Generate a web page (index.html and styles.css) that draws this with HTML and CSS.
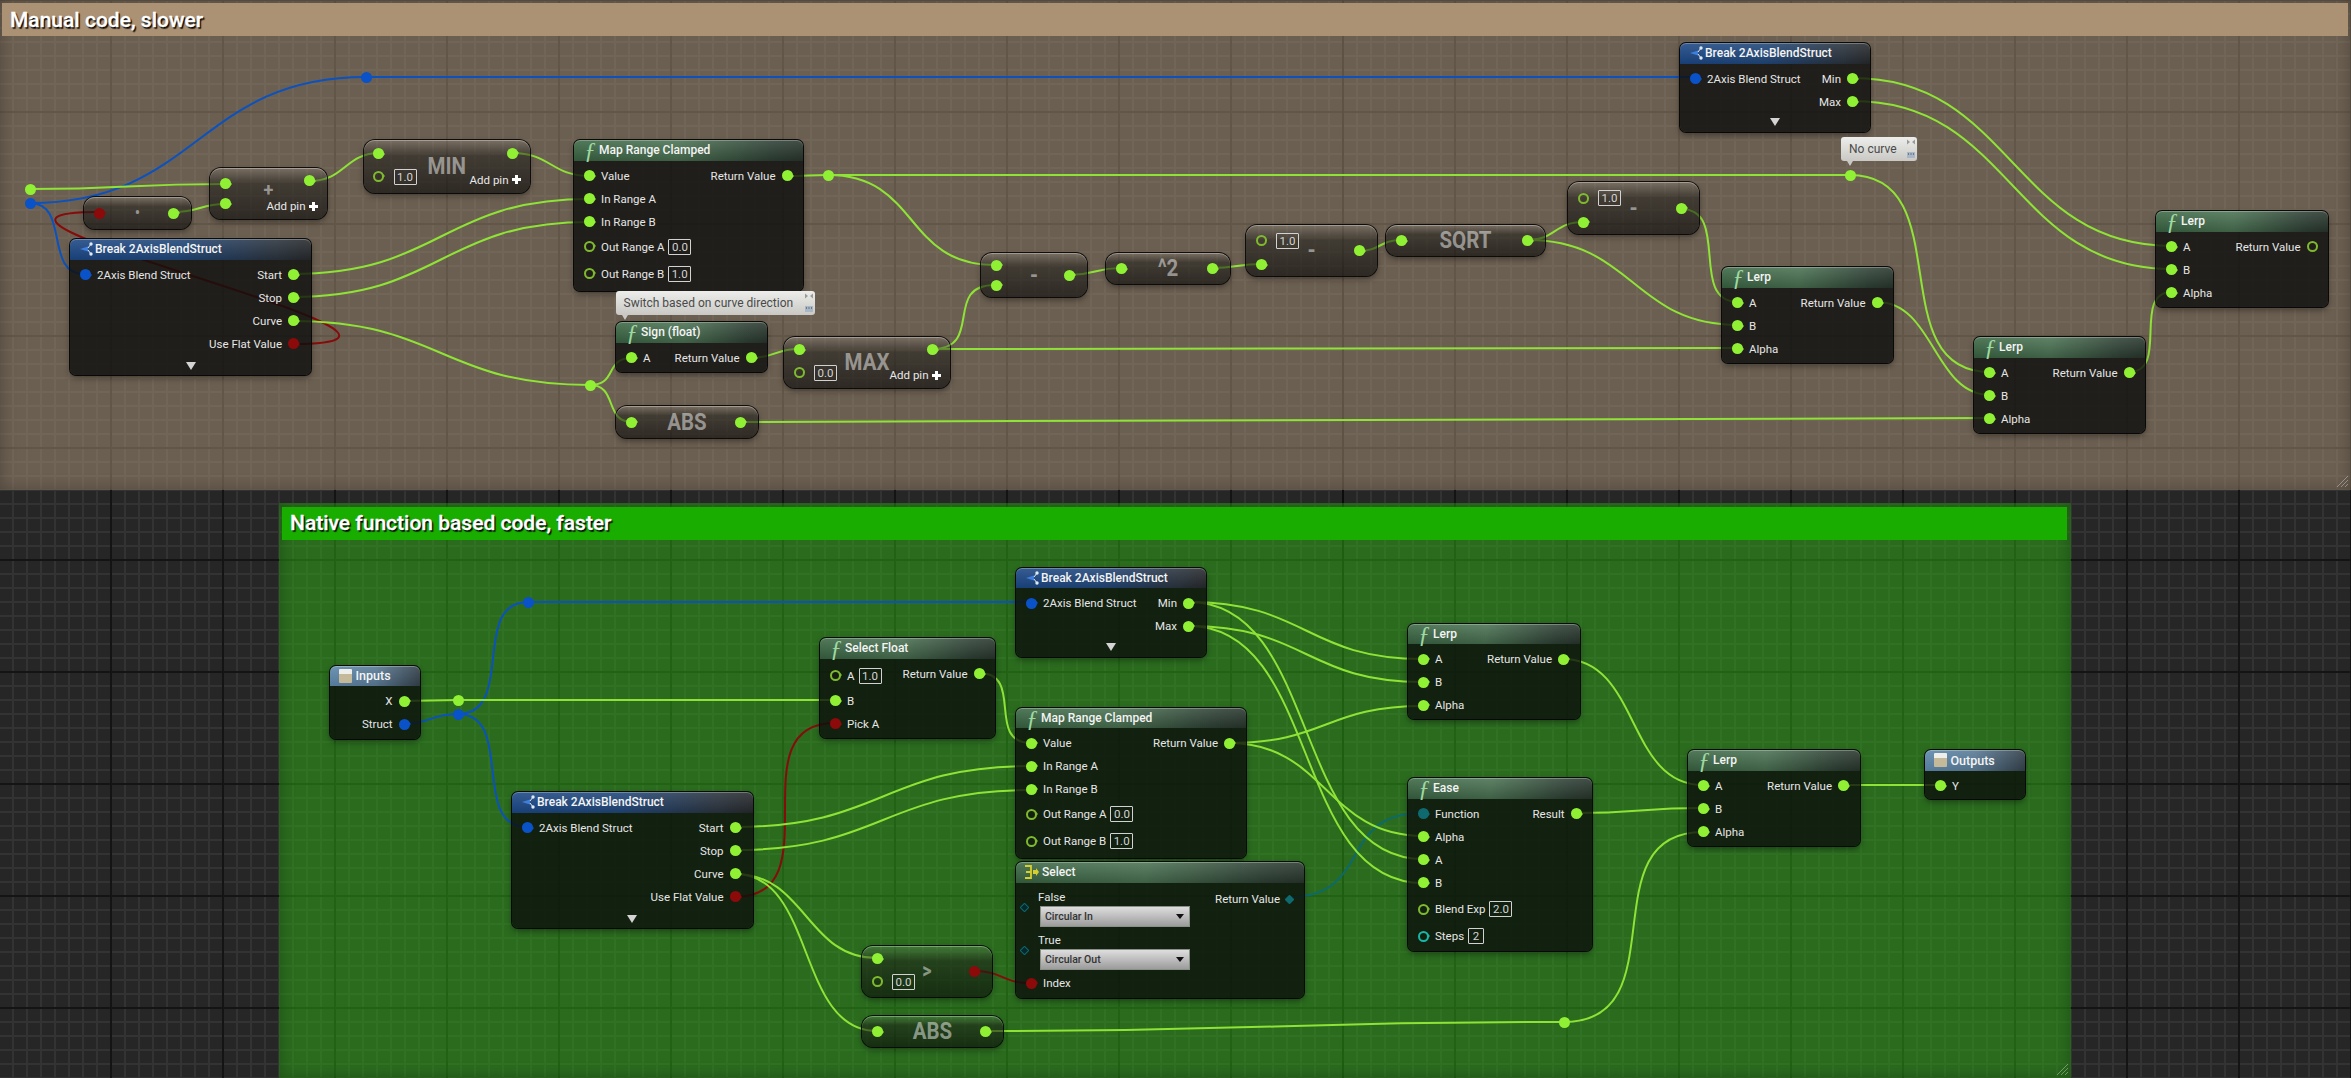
FILE: index.html
```html
<!DOCTYPE html>
<html lang="en">
<head>
<meta charset="utf-8">
<title>Blueprint graph</title>
<link rel="stylesheet" href="styles.css">
</head>
<body>
<main class="graph">

  <section class="comment tan">
    <h2 class="comment-title">Manual code, slower</h2>
    <svg class="grip" viewBox="0 0 12 12"><path d="M1 12 12 1M5 12l7-7M9 12l3-3"/></svg>
  </section>
  <section class="comment green">
    <h2 class="comment-title">Native function based code, faster</h2>
    <svg class="grip" viewBox="0 0 12 12"><path d="M1 12 12 1M5 12l7-7M9 12l3-3"/></svg>
  </section>

  <svg class="wires" viewBox="0 0 2351 1078">
    <g class="w-blue">
      <path d="M30 203C198 203 198 77 366 77"/>
      <path d="M366 77H1695"/>
      <path d="M30 203C70 203 44 274 84 274"/>
      <path d="M403 724C430 724 430 714 458 714"/>
      <path d="M458 714C516 714 470 602 528 602"/>
      <path d="M458 714C515 714 470 827 527 827"/>
      <path d="M528 602H1031"/>
    </g>
    <g class="w-red">
      <path d="M292 344C510 344 -110 212 99 212"/>
      <path d="M735 897C835 897 735 723 835 723"/>
      <path d="M975 971C1002 971 1002 983 1030 983"/>
    </g>
    <path class="w-teal" d="M1288 897C1375 897 1335 813 1423 813"/>
    <g class="w-green">
      <path d="M30 189C127 189 128 184 225 184"/>
      <path d="M174 212C200 212 200 204 225 204"/>
      <path d="M310 181C345 181 345 153 380 153"/>
      <path d="M512 153C551 153 551 176 590 176"/>
      <path d="M292 274C441 274 441 199 590 199"/>
      <path d="M292 297C441 297 441 222 590 222"/>
      <path d="M292 321C441 321 441 385 590 385"/>
      <path d="M590 385C618 385 604 358 632 358"/>
      <path d="M590 385C618 385 604 422 632 422"/>
      <path d="M787 176C808 176 808 175 828 175H1850"/>
      <path d="M828 175C920 175 903 265 995 265"/>
      <path d="M750 358C775 358 775 349 799 349"/>
      <path d="M932 349C985 349 942 285 995 285"/>
      <path d="M932 349C1335 349 1335 348 1738 348"/>
      <path d="M740 422C1365 422 1365 418 1990 418"/>
      <path d="M1069 275C1095 275 1095 268 1121 268"/>
      <path d="M1212 268C1237 268 1237 264 1262 264"/>
      <path d="M1359 251C1380 251 1380 240 1401 240"/>
      <path d="M1528 240C1555 240 1555 222 1583 222"/>
      <path d="M1528 240C1633 240 1633 325 1738 325"/>
      <path d="M1681 209C1731 209 1688 302 1738 302"/>
      <path d="M1877 302C1934 302 1934 395 1990 395"/>
      <path d="M1850 175C1960 175 1880 372 1990 372"/>
      <path d="M2129 372C2170 372 2131 292 2172 292"/>
      <path d="M1853 78C2012 78 2012 246 2172 246"/>
      <path d="M1853 101C2012 101 2012 269 2172 269"/>
      <path d="M403 701C430 701 430 700 458 700H835"/>
      <path d="M735 827C883 827 883 766 1031 766"/>
      <path d="M735 850C883 850 883 790 1031 790"/>
      <path d="M735 874C806 874 806 958 877 958"/>
      <path d="M735 874C816 874 796 1031 877 1031"/>
      <path d="M986 1031C1275 1031 1275 1022 1564 1022"/>
      <path d="M1564 1022C1680 1022 1587 832 1703 832"/>
      <path d="M979 673C1025 673 985 743 1031 743"/>
      <path d="M1189 602C1306 602 1306 659 1423 659"/>
      <path d="M1189 626C1306 626 1306 682 1423 682"/>
      <path d="M1189 602C1320 602 1292 859 1423 859"/>
      <path d="M1189 626C1320 626 1292 883 1423 883"/>
      <path d="M1229 743C1326 743 1326 706 1423 706"/>
      <path d="M1229 743C1326 743 1326 836 1423 836"/>
      <path d="M1563 659C1640 659 1626 785 1703 785"/>
      <path d="M1576 813C1640 813 1640 808 1703 808"/>
      <path d="M1843 785H1941"/>
    </g>
  </svg>

  <i class="knot k1"></i><i class="knot blue k2"></i><i class="knot blue k3"></i>
  <i class="knot k4"></i><i class="knot k5"></i><i class="knot k6"></i>
  <i class="knot k7"></i><i class="knot blue k8"></i><i class="knot blue k9"></i><i class="knot k10"></i>

  <!-- Manual code -->
  <div class="node pure n-dot">
    <div class="col"><div class="row"><i class="pin red"></i></div></div>
    <div class="glyph dot">•</div>
    <div class="col out"><div class="row"><i class="pin"></i></div></div>
  </div>
  <div class="node pure n-add">
    <div class="col"><div class="row"><i class="pin"></i></div><div class="row"><i class="pin"></i></div></div>
    <div class="glyph op">+</div>
    <div class="col out spaced"><div class="row"><i class="pin"></i></div><div class="row addpin">Add pin<i class="plus"></i></div></div>
  </div>
  <div class="node pure n-min">
    <div class="col"><div class="row"><i class="pin"></i></div><div class="row lit-low"><i class="pin hollow"></i><span class="lit">1.0</span></div></div>
    <div class="glyph">MIN</div>
    <div class="col out spaced"><div class="row"><i class="pin"></i></div><div class="row addpin">Add pin<i class="plus"></i></div></div>
  </div>

  <div class="node brk n-break-a">
    <div class="hdr"><svg class="ic" viewBox="0 0 14 14"><path class="ic-b" d="M0 7 8 4.5V9.5Z"/><circle class="ic-w" cx="11" cy="2" r="1.7"/><circle class="ic-w" cx="11" cy="12" r="1.7"/><path class="ic-l" d="M8 6 11 2M8 8l3 4"/></svg>Break 2AxisBlendStruct</div>
    <div class="body">
      <div class="col"><div class="row"><i class="pin blue"></i><span>2Axis Blend Struct</span></div></div>
      <div class="col out">
        <div class="row"><span>Start</span><i class="pin"></i></div>
        <div class="row"><span>Stop</span><i class="pin"></i></div>
        <div class="row"><span>Curve</span><i class="pin"></i></div>
        <div class="row"><span>Use Flat Value</span><i class="pin red"></i></div>
      </div>
    </div>
    <div class="chev"></div>
  </div>

  <div class="node fn n-map-a">
    <div class="hdr"><span class="ficon">ƒ</span>Map Range Clamped</div>
    <div class="body">
      <div class="col">
        <div class="row"><i class="pin"></i><span>Value</span></div>
        <div class="row"><i class="pin"></i><span>In Range A</span></div>
        <div class="row"><i class="pin"></i><span>In Range B</span></div>
        <div class="row tall"><i class="pin hollow"></i><span>Out Range A</span><span class="lit">0.0</span></div>
        <div class="row tall"><i class="pin hollow"></i><span>Out Range B</span><span class="lit">1.0</span></div>
      </div>
      <div class="col out"><div class="row"><span>Return Value</span><i class="pin"></i></div></div>
    </div>
  </div>

  <div class="bubble b-switch">Switch based on curve direction<svg class="bub-ic" viewBox="0 0 8 22"><path class="bi-p" d="M0 1.5V6.5L3 4ZM8 1.5V6.5L5 4Z"/><path class="bi-s" d="M0 14h8v6H0Z"/><path class="bi-t" d="M1 16h1M3.500 16h1M6 16h1"/></svg></div>

  <div class="node fn n-sign">
    <div class="hdr"><span class="ficon">ƒ</span>Sign (float)</div>
    <div class="body">
      <div class="col"><div class="row"><i class="pin"></i><span>A</span></div></div>
      <div class="col out"><div class="row"><span>Return Value</span><i class="pin"></i></div></div>
    </div>
  </div>
  <div class="node pure n-abs-a">
    <div class="col"><div class="row"><i class="pin"></i></div></div>
    <div class="glyph">ABS</div>
    <div class="col out"><div class="row"><i class="pin"></i></div></div>
  </div>
  <div class="node pure n-max">
    <div class="col"><div class="row"><i class="pin"></i></div><div class="row lit-low"><i class="pin hollow"></i><span class="lit">0.0</span></div></div>
    <div class="glyph">MAX</div>
    <div class="col out spaced"><div class="row"><i class="pin"></i></div><div class="row addpin">Add pin<i class="plus"></i></div></div>
  </div>
  <div class="node pure n-minus">
    <div class="col"><div class="row"><i class="pin"></i></div><div class="row"><i class="pin"></i></div></div>
    <div class="glyph">-</div>
    <div class="col out"><div class="row"><i class="pin"></i></div></div>
  </div>
  <div class="node pure n-sq">
    <div class="col"><div class="row"><i class="pin"></i></div></div>
    <div class="glyph">^2</div>
    <div class="col out"><div class="row"><i class="pin"></i></div></div>
  </div>
  <div class="node pure n-sub-a">
    <div class="col"><div class="row lit-high"><i class="pin hollow"></i><span class="lit">1.0</span></div><div class="row"><i class="pin"></i></div></div>
    <div class="glyph">-</div>
    <div class="col out"><div class="row"><i class="pin"></i></div></div>
  </div>
  <div class="node pure n-sqrt">
    <div class="col"><div class="row"><i class="pin"></i></div></div>
    <div class="glyph">SQRT</div>
    <div class="col out"><div class="row"><i class="pin"></i></div></div>
  </div>
  <div class="node pure n-sub-b">
    <div class="col"><div class="row lit-high"><i class="pin hollow"></i><span class="lit">1.0</span></div><div class="row"><i class="pin"></i></div></div>
    <div class="glyph">-</div>
    <div class="col out"><div class="row"><i class="pin"></i></div></div>
  </div>

  <div class="node brk n-break-b">
    <div class="hdr"><svg class="ic" viewBox="0 0 14 14"><path class="ic-b" d="M0 7 8 4.5V9.5Z"/><circle class="ic-w" cx="11" cy="2" r="1.7"/><circle class="ic-w" cx="11" cy="12" r="1.7"/><path class="ic-l" d="M8 6 11 2M8 8l3 4"/></svg>Break 2AxisBlendStruct</div>
    <div class="body">
      <div class="col"><div class="row"><i class="pin blue"></i><span>2Axis Blend Struct</span></div></div>
      <div class="col out"><div class="row"><span>Min</span><i class="pin"></i></div><div class="row"><span>Max</span><i class="pin"></i></div></div>
    </div>
    <div class="chev"></div>
  </div>

  <div class="bubble b-nocurve">No curve<svg class="bub-ic" viewBox="0 0 8 22"><path class="bi-p" d="M0 1.5V6.5L3 4ZM8 1.5V6.5L5 4Z"/><path class="bi-s" d="M0 14h8v6H0Z"/><path class="bi-t" d="M1 16h1M3.500 16h1M6 16h1"/></svg></div>

  <div class="node fn n-lerp-a">
    <div class="hdr"><span class="ficon">ƒ</span>Lerp</div>
    <div class="body">
      <div class="col"><div class="row"><i class="pin"></i><span>A</span></div><div class="row"><i class="pin"></i><span>B</span></div><div class="row"><i class="pin"></i><span>Alpha</span></div></div>
      <div class="col out"><div class="row"><span>Return Value</span><i class="pin"></i></div></div>
    </div>
  </div>
  <div class="node fn n-lerp-b">
    <div class="hdr"><span class="ficon">ƒ</span>Lerp</div>
    <div class="body">
      <div class="col"><div class="row"><i class="pin"></i><span>A</span></div><div class="row"><i class="pin"></i><span>B</span></div><div class="row"><i class="pin"></i><span>Alpha</span></div></div>
      <div class="col out"><div class="row"><span>Return Value</span><i class="pin"></i></div></div>
    </div>
  </div>
  <div class="node fn n-lerp-c">
    <div class="hdr"><span class="ficon">ƒ</span>Lerp</div>
    <div class="body">
      <div class="col"><div class="row"><i class="pin"></i><span>A</span></div><div class="row"><i class="pin"></i><span>B</span></div><div class="row"><i class="pin"></i><span>Alpha</span></div></div>
      <div class="col out"><div class="row"><span>Return Value</span><i class="pin hollow"></i></div></div>
    </div>
  </div>

  <!-- Native function based code -->
  <div class="node tun n-inputs">
    <div class="hdr"><svg class="ic box" viewBox="0 0 13 14"><path class="box-t" d="M0 1a1 1 0 0 1 1-1h11a1 1 0 0 1 1 1v4H0Z"/><path class="box-b" d="M0 5h13v8a1 1 0 0 1-1 1H1a1 1 0 0 1-1-1Z"/></svg>Inputs</div>
    <div class="body end">
      <div class="col out"><div class="row"><span>X</span><i class="pin"></i></div><div class="row"><span>Struct</span><i class="pin blue"></i></div></div>
    </div>
  </div>

  <div class="node brk n-break-c">
    <div class="hdr"><svg class="ic" viewBox="0 0 14 14"><path class="ic-b" d="M0 7 8 4.5V9.5Z"/><circle class="ic-w" cx="11" cy="2" r="1.7"/><circle class="ic-w" cx="11" cy="12" r="1.7"/><path class="ic-l" d="M8 6 11 2M8 8l3 4"/></svg>Break 2AxisBlendStruct</div>
    <div class="body">
      <div class="col"><div class="row"><i class="pin blue"></i><span>2Axis Blend Struct</span></div></div>
      <div class="col out">
        <div class="row"><span>Start</span><i class="pin"></i></div>
        <div class="row"><span>Stop</span><i class="pin"></i></div>
        <div class="row"><span>Curve</span><i class="pin"></i></div>
        <div class="row"><span>Use Flat Value</span><i class="pin red"></i></div>
      </div>
    </div>
    <div class="chev"></div>
  </div>

  <div class="node fn n-selfloat">
    <div class="hdr"><span class="ficon">ƒ</span>Select Float</div>
    <div class="body">
      <div class="col"><div class="row tall"><i class="pin hollow"></i><span>A</span><span class="lit">1.0</span></div><div class="row"><i class="pin"></i><span>B</span></div><div class="row"><i class="pin red"></i><span>Pick A</span></div></div>
      <div class="col out"><div class="row"><span>Return Value</span><i class="pin"></i></div></div>
    </div>
  </div>

  <div class="node brk n-break-d">
    <div class="hdr"><svg class="ic" viewBox="0 0 14 14"><path class="ic-b" d="M0 7 8 4.5V9.5Z"/><circle class="ic-w" cx="11" cy="2" r="1.7"/><circle class="ic-w" cx="11" cy="12" r="1.7"/><path class="ic-l" d="M8 6 11 2M8 8l3 4"/></svg>Break 2AxisBlendStruct</div>
    <div class="body">
      <div class="col"><div class="row"><i class="pin blue"></i><span>2Axis Blend Struct</span></div></div>
      <div class="col out"><div class="row"><span>Min</span><i class="pin"></i></div><div class="row"><span>Max</span><i class="pin"></i></div></div>
    </div>
    <div class="chev"></div>
  </div>

  <div class="node fn n-map-b">
    <div class="hdr"><span class="ficon">ƒ</span>Map Range Clamped</div>
    <div class="body">
      <div class="col">
        <div class="row"><i class="pin"></i><span>Value</span></div>
        <div class="row"><i class="pin"></i><span>In Range A</span></div>
        <div class="row"><i class="pin"></i><span>In Range B</span></div>
        <div class="row tall"><i class="pin hollow"></i><span>Out Range A</span><span class="lit">0.0</span></div>
        <div class="row tall"><i class="pin hollow"></i><span>Out Range B</span><span class="lit">1.0</span></div>
      </div>
      <div class="col out"><div class="row"><span>Return Value</span><i class="pin"></i></div></div>
    </div>
  </div>

  <div class="node fn n-select">
    <div class="hdr"><svg class="ic sel" viewBox="0 0 15 14"><path class="sel-l" d="M1 1H7V13H1M2 7H7"/><path class="sel-a" d="M9 5 12 5 12 3 15 7 12 11 12 9 9 9Z"/></svg>Select</div>
    <div class="body">
      <div class="col wide">
        <div class="opt"><i class="pin diamond"></i><div class="opt-main"><span>False</span><div class="combo">Circular In</div></div></div>
        <div class="opt"><i class="pin diamond"></i><div class="opt-main"><span>True</span><div class="combo">Circular Out</div></div></div>
        <div class="row index"><i class="pin red"></i><span>Index</span></div>
      </div>
      <div class="col out"><div class="row ret"><span>Return Value</span><i class="pin diamond solid"></i></div></div>
    </div>
  </div>

  <div class="node fn n-lerp-d">
    <div class="hdr"><span class="ficon">ƒ</span>Lerp</div>
    <div class="body">
      <div class="col"><div class="row"><i class="pin"></i><span>A</span></div><div class="row"><i class="pin"></i><span>B</span></div><div class="row"><i class="pin"></i><span>Alpha</span></div></div>
      <div class="col out"><div class="row"><span>Return Value</span><i class="pin"></i></div></div>
    </div>
  </div>

  <div class="node fn n-ease">
    <div class="hdr"><span class="ficon">ƒ</span>Ease</div>
    <div class="body">
      <div class="col">
        <div class="row"><i class="pin teal"></i><span>Function</span></div>
        <div class="row"><i class="pin"></i><span>Alpha</span></div>
        <div class="row"><i class="pin"></i><span>A</span></div>
        <div class="row"><i class="pin"></i><span>B</span></div>
        <div class="row tall gap"><i class="pin hollow"></i><span>Blend Exp</span><span class="lit">2.0</span></div>
        <div class="row tall"><i class="pin hollow cyan"></i><span>Steps</span><span class="lit narrow">2</span></div>
      </div>
      <div class="col out"><div class="row"><span>Result</span><i class="pin"></i></div></div>
    </div>
  </div>

  <div class="node pure n-gt">
    <div class="col"><div class="row"><i class="pin"></i></div><div class="row lit-low"><i class="pin hollow"></i><span class="lit">0.0</span></div></div>
    <div class="glyph small">&gt;</div>
    <div class="col out"><div class="row"><i class="pin red"></i></div></div>
  </div>
  <div class="node pure n-abs-b">
    <div class="col"><div class="row"><i class="pin"></i></div></div>
    <div class="glyph">ABS</div>
    <div class="col out"><div class="row"><i class="pin"></i></div></div>
  </div>

  <div class="node fn n-lerp-e">
    <div class="hdr"><span class="ficon">ƒ</span>Lerp</div>
    <div class="body">
      <div class="col"><div class="row"><i class="pin"></i><span>A</span></div><div class="row"><i class="pin"></i><span>B</span></div><div class="row"><i class="pin"></i><span>Alpha</span></div></div>
      <div class="col out"><div class="row"><span>Return Value</span><i class="pin"></i></div></div>
    </div>
  </div>

  <div class="node tun n-outputs">
    <div class="hdr"><svg class="ic box" viewBox="0 0 13 14"><path class="box-t" d="M0 1a1 1 0 0 1 1-1h11a1 1 0 0 1 1 1v4H0Z"/><path class="box-b" d="M0 5h13v8a1 1 0 0 1-1 1H1a1 1 0 0 1-1-1Z"/></svg>Outputs</div>
    <div class="body">
      <div class="col"><div class="row"><i class="pin"></i><span>Y</span></div></div>
    </div>
  </div>

</main>
</body>
</html>
```

FILE: styles.css
```css
* { box-sizing: border-box; }
html, body { margin: 0; height: 100%; overflow: hidden; background: #262626; }

.graph {
  position: relative;
  width: 2351px;
  height: 1078px;
  overflow: hidden;
  font-family: Roboto, "Liberation Sans", sans-serif;
  color: #e6e6e6;
  font-size: 11.500px;
  background-color: #262626;
  background-image:
    linear-gradient(90deg, #0c0c0c 2px, transparent 2px),
    linear-gradient(90deg, #141414 2px, transparent 2px),
    linear-gradient(0deg, #141414 2px, transparent 2px),
    linear-gradient(90deg, #333 2px, transparent 2px),
    linear-gradient(0deg, #333 2px, transparent 2px);
  background-size: 2351px 100%, 112px 100%, 100% 112px, 14px 100%, 100% 14px;
  background-position: 1342px 0, -2px 0, 0 1px, -2px 0, 0 1px;
  background-repeat: no-repeat, repeat, repeat, repeat, repeat;
}

/* comment boxes */
.comment { position: absolute; box-shadow: inset 0 0 16px rgba(0, 0, 0, .28); }
.comment.tan { left: 0; top: 0; width: 2351px; height: 490px; padding: 3px 3px 0 2px; background: rgba(176, 152, 124, .5); }
.comment.green { left: 279px; top: 503px; width: 1792px; height: 575px; padding: 4px 4px 0 3px; background: rgba(46, 176, 22, .5); }
.comment-title {
  margin: 0;
  height: 33px;
  padding-left: 8px;
  display: flex;
  align-items: center;
  font-size: 21px;
  font-weight: 500;
  color: #fff;
  -webkit-text-stroke: .3px #fff;
  text-shadow: 1px 1px 1px #000, 1.500px 1.500px 1px rgba(0, 0, 0, .7);
}
.tan .comment-title { background: #ac9274; }
.green .comment-title { background: #19ad00; height: 32.500px; }
.grip { position: absolute; right: 3px; bottom: 3px; width: 12px; height: 12px; }
.grip path { fill: none; stroke: rgba(255, 255, 255, .35); stroke-width: 1; }

/* wires */
.wires { position: absolute; left: 0; top: 0; width: 2351px; height: 1078px; }
.wires path { fill: none; stroke-width: 2; }
.w-green path { stroke: #8fe336; }
.w-blue path { stroke: #0b52bf; }
.w-red path { stroke: #860c0c; }
.wires .w-teal { stroke: #0c6a6c; }

/* reroute knots */
.knot { position: absolute; width: 11px; height: 11px; margin: -5.500px 0 0 -5.500px; border-radius: 50%; background: #90f033; }
.knot.blue { background: #0a52c8; }
.k1 { left: 30px; top: 189px; }
.k2 { left: 30px; top: 203px; }
.k3 { left: 366px; top: 77px; }
.k4 { left: 590px; top: 385px; }
.k5 { left: 828px; top: 175px; }
.k6 { left: 1850px; top: 175px; }
.k7 { left: 458px; top: 700px; }
.k8 { left: 458px; top: 714px; }
.k9 { left: 528px; top: 602px; }
.k10 { left: 1564px; top: 1022px; }

/* nodes */
.node {
  position: absolute;
  border-radius: 6px;
  background: rgba(12, 14, 13, .8);
  box-shadow: 0 0 0 1px rgba(5, 5, 5, .95), 0 3px 6px rgba(0, 0, 0, .4);
}
.hdr {
  height: 20.500px;
  padding-left: 10px;
  display: flex;
  align-items: center;
  border-radius: 6px 6px 0 0;
  font-size: 12px;
  font-weight: 500;
  color: #f4f4f4;
  box-shadow: inset 0 1px 0 rgba(255, 255, 255, .28);
}
.fn .hdr {
  background:
    linear-gradient(180deg, rgba(255, 255, 255, .12), rgba(0, 0, 0, .16)),
    linear-gradient(90deg, #3a6643 0, #4a7252 45%, #2f4236 85%, #28362d 100%);
}
.brk .hdr {
  background:
    linear-gradient(180deg, rgba(255, 255, 255, .12), rgba(0, 0, 0, .1)),
    linear-gradient(90deg, #1a4684 0, #1f4577 45%, #29323d 85%, #25282b 100%);
}
.tun .hdr {
  font-size: 12.500px;
  background:
    linear-gradient(180deg, rgba(255, 255, 255, .1), rgba(0, 0, 0, .1)),
    linear-gradient(90deg, #5e89ad 0, #5a7b96 50%, #33404a 100%);
}
.ficon {
  width: 15px;
  font-family: "Liberation Serif", serif;
  font-style: italic;
  font-weight: 400;
  font-size: 24px;
  line-height: 1;
  color: #9ed9a0;
}
.ic { width: 14px; height: 14px; margin-right: 1px; flex: none; }
.ic-b { fill: #3f7fdc; }
.ic-w { fill: #dfeaf7; }
.ic-l { stroke: #dfeaf7; stroke-width: 1; fill: none; }
.box { width: 13px; margin-right: 4px; margin-left: -1.500px; }
.box-t { fill: #eeeeea; }
.box-b { fill: #c4b999; }
.sel { width: 15px; margin-right: 3px; margin-left: -2px; }
.sel-l { fill: none; stroke: #d8cf2c; stroke-width: 1.800; }
.sel-a { fill: #d8cf2c; }

.body { display: flex; justify-content: space-between; padding-top: 3.500px; }
.body.end { justify-content: flex-end; }
.col { display: flex; flex-direction: column; padding-left: 10px; }
.col.out { align-items: flex-end; padding-left: 0; padding-right: 10.500px; }
.brk .col.out { padding-right: 12px; }
.row { height: 23px; display: flex; align-items: center; gap: 6px; white-space: nowrap; }
.row.tall { height: 27px; }
.row.gap { margin-top: 1.500px; }

/* pins */
.pin { position: relative; flex: none; width: 11px; height: 11px; border-radius: 50%; background: #90f033; }
.pin::after {
  content: "";
  position: absolute;
  left: 10px;
  top: 3.500px;
  border-left: 2.500px solid #90f033;
  border-top: 2px solid transparent;
  border-bottom: 2px solid transparent;
}
.pin.hollow { background: transparent; border: 2.200px solid #7fb92e; }
.pin.hollow::after { left: 7.800px; top: 1.300px; border-left-color: #7fb92e; }
.pin.blue { background: #0a52c8; }
.pin.blue::after { border-left-color: #0a52c8; }
.pin.red { background: #8c0a0a; }
.pin.red::after { border-left-color: #8c0a0a; }
.pin.teal { background: #0e6a6e; }
.pin.teal::after { border-left-color: #0e6a6e; }
.pin.cyan { border-color: #16b8a8; }
.pin.cyan::after { border-left-color: #16b8a8; }
.pin.diamond { width: 7px; height: 7px; border-radius: 1px; transform: rotate(45deg); background: #07282b; border: 1.500px solid #0b6a70; }
.pin.diamond.solid { background: #0e6a6e; border: none; }
.pin.diamond::after { display: none; }

/* literal input */
.lit {
  width: 23px;
  height: 16px;
  margin-left: -2px;
  display: flex;
  align-items: center;
  justify-content: center;
  border: 1px solid #d2d2d2;
  border-radius: 1px;
  color: #d4d4d4;
  font-size: 11.500px;
}
.lit.narrow { width: 16px; }

/* compact (pure) nodes */
.pure {
  display: flex;
  justify-content: space-between;
  border-radius: 11px;
  background: linear-gradient(180deg, rgba(255, 255, 255, .1) 0, rgba(30, 30, 26, .55) 30%, rgba(8, 8, 8, .62) 100%);
  box-shadow: 0 0 0 1px rgba(5, 5, 5, .9), inset 0 1px 0 rgba(255, 255, 255, .3), 0 3px 6px rgba(0, 0, 0, .4);
}
.pure .col { justify-content: center; padding-left: 9.500px; }
.pure .col.out { padding-left: 0; padding-right: 12px; }
.pure .row { height: 20px; gap: 9.500px; }
.pure .row.lit-low { height: 26px; }
.pure .row.lit-high { height: 28px; }
.pure .lit { margin-left: 0; }
.pure .spaced .row { height: 28px; }
.pure .addpin { margin-right: -2.500px; gap: 3px; color: #e8e8e8; line-height: 12px; }
.plus {
  width: 9px;
  height: 9px;
  background:
    linear-gradient(#fff, #fff) center / 3px 9px no-repeat,
    linear-gradient(#fff, #fff) center / 9px 3px no-repeat;
}
.glyph {
  position: absolute;
  inset: 0;
  display: flex;
  align-items: center;
  justify-content: center;
  font-size: 20.500px;
  font-weight: 700;
  line-height: .7;
  color: rgba(255, 255, 255, .48);
  transform: scaleY(1.18);
  pointer-events: none;
}
.glyph.op { font-size: 18px; transform: translateY(-3px); }
.glyph.small { font-size: 18px; font-weight: 700; }
.glyph.dot { font-size: 16px; font-weight: 400; }

/* chevron */
.chev { width: 0; height: 0; margin: 0 auto; border-left: 5px solid transparent; border-right: 5px solid transparent; border-top: 8px solid #d4d4d4; }
.n-break-a .chev, .n-break-c .chev { margin-top: 7px; }
.n-break-b .chev, .n-break-d .chev { margin-top: 5px; }

/* select node */
.col.wide { padding-left: 5px; }
.opt { height: 43px; display: flex; align-items: center; gap: 13px; }
.opt-main { display: flex; flex-direction: column; gap: 1px; }
.opt-main span { height: 18px; display: flex; align-items: center; margin-left: -3px; }
.combo {
  position: relative;
  width: 148px;
  height: 18.500px;
  padding-left: 4px;
  display: flex;
  align-items: center;
  font-size: 10.500px;
  font-weight: 500;
  color: #333;
  background: linear-gradient(180deg, #dedede, #9c9c9c);
  box-shadow: 0 0 0 1px rgba(255, 255, 255, .5);
}
.combo::after {
  content: "";
  position: absolute;
  right: 5px;
  top: 7px;
  border-left: 4px solid transparent;
  border-right: 4px solid transparent;
  border-top: 5px solid #111;
}
.row.index { padding-left: 5px; margin-top: 0; }
.row.ret { margin-top: 2px; }
.n-select .body { padding-top: 3px; }

/* comment bubbles */
.bubble {
  position: absolute;
  display: flex;
  align-items: center;
  height: 24px;
  padding-left: 8px;
  border-radius: 3px;
  background: linear-gradient(180deg, #ededeb, #c9c8c4);
  color: #4a4a4a;
  font-size: 12px;
  white-space: nowrap;
}
.bubble::after {
  content: "";
  position: absolute;
  left: 6px;
  top: 24px;
  border-left: 3px solid transparent;
  border-right: 3px solid transparent;
  border-top: 5px solid #c9c8c4;
}
.bub-ic { position: absolute; right: 2px; top: 1px; width: 8px; height: 22px; }
.bi-p { fill: #9a9a9a; }
.bi-s { fill: #a8b6c6; }
.bi-t { stroke: #2e3c50; stroke-width: 1; fill: none; }
.b-switch { left: 615.500px; top: 291px; width: 199px; }
.b-nocurve { left: 1841px; top: 137px; width: 76px; }

/* node placement on the graph */
.n-dot { left: 84px; top: 197px; width: 107px; height: 32px; }
.n-add { left: 210px; top: 168px; width: 117px; height: 51px; }
.n-min { left: 363.500px; top: 140px; width: 166.500px; height: 53px; }
.n-break-a { left: 70px; top: 239px; width: 241px; height: 136px; }
.n-map-a { left: 574px; top: 140px; width: 229px; height: 151px; }
.n-sign { left: 616px; top: 322px; width: 151px; height: 50px; }
.n-abs-a { left: 616px; top: 406px; width: 142px; height: 32px; }
.n-max { left: 784px; top: 337px; width: 166px; height: 51px; }
.n-minus { left: 981px; top: 253px; width: 106px; height: 44px; }
.n-sq { left: 1106px; top: 253px; width: 124px; height: 31px; }
.n-sub-a { left: 1246px; top: 225px; width: 131px; height: 51px; }
.n-sqrt { left: 1386px; top: 225px; width: 159px; height: 31px; }
.n-sub-b { left: 1568px; top: 182px; width: 131px; height: 52px; }
.n-break-b { left: 1680px; top: 43px; width: 190px; height: 89px; }
.n-lerp-a { left: 1722px; top: 267px; width: 171px; height: 96px; }
.n-lerp-b { left: 1974px; top: 337px; width: 171px; height: 96px; }
.n-lerp-c { left: 2156px; top: 211px; width: 172px; height: 96px; }
.n-inputs { left: 330px; top: 665.500px; width: 90px; height: 73.500px; }
.n-break-c { left: 512px; top: 792px; width: 240.500px; height: 135.500px; }
.n-selfloat { left: 820px; top: 638px; width: 175px; height: 99.500px; }
.n-break-d { left: 1016px; top: 567.500px; width: 190px; height: 89.500px; }
.n-map-b { left: 1016px; top: 707.500px; width: 229.500px; height: 150px; }
.n-select { left: 1016px; top: 862px; width: 287.500px; height: 135.500px; }
.n-lerp-d { left: 1408px; top: 623.500px; width: 171.500px; height: 95.500px; }
.n-ease { left: 1408px; top: 778px; width: 184px; height: 173px; }
.n-gt { left: 862px; top: 946px; width: 130px; height: 51px; }
.n-abs-b { left: 862px; top: 1016px; width: 141px; height: 31px; }
.n-lerp-e { left: 1688px; top: 750px; width: 171.500px; height: 95.500px; }
.n-outputs { left: 1925px; top: 750px; width: 100px; height: 49px; }
```
